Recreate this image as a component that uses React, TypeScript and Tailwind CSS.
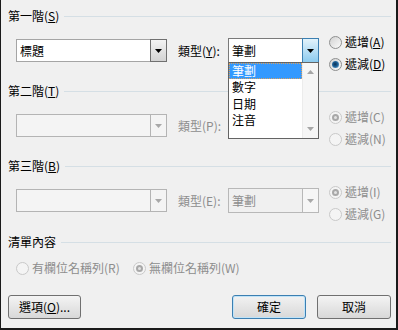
import React from "react"

const FONT = { fontFamily: '"Noto Sans CJK TC", "Noto Sans", sans-serif' }

function Arrow({ color = "#000", up = false }: { color?: string; up?: boolean }) {
  return (
    <svg width="7" height="4" viewBox="0 0 7 4">
      <path d={up ? "M0 4h7L3.5 0z" : "M0 0h7L3.5 4z"} fill={color} />
    </svg>
  )
}

function Key({ k }: { k: string }) {
  return (
    <>
      (<span className="underline underline-offset-[1px]">{k}</span>)
    </>
  )
}

function Header({ children, mt }: { children: React.ReactNode; mt: string }) {
  return (
    <div className={`flex items-center h-[14px] ${mt}`}>
      <span className="text-black whitespace-nowrap">{children}</span>
      <div className="flex-1 h-px bg-[#d5dfe5] ml-[5px]" />
    </div>
  )
}

function Radio({
  label,
  checked = false,
  disabled = false,
}: {
  label: React.ReactNode
  checked?: boolean
  disabled?: boolean
}) {
  return (
    <div className="flex items-center h-[22px]">
      <span
        className={`w-[13px] h-[13px] rounded-full border flex items-center justify-center flex-shrink-0 ${
          disabled
            ? "border-[#c9c9c9] bg-[#f4f4f4]"
            : "border-[#8e8f8f] bg-gradient-to-br from-[#d2d2d2] to-[#fbfbfb]"
        }`}
      >
        {checked &&
          (disabled ? (
            <span className="w-[7px] h-[7px] rounded-full border-2 border-[#a8a8a8] bg-[#e2e2e2]" />
          ) : (
            <span className="w-[7px] h-[7px] rounded-full bg-[radial-gradient(circle_at_45%_45%,#0b2f52_0%,#1d5f95_45%,#7fbde8_100%)]" />
          ))}
      </span>
      <span className={`ml-[3px] whitespace-nowrap ${disabled ? "text-[#8d8d8d]" : "text-black"}`}>{label}</span>
    </div>
  )
}

function Combo({
  text,
  disabled = false,
  width,
}: {
  text?: string
  disabled?: boolean
  width: string
}) {
  return (
    <div
      className={`flex h-[23px] border ${width} ${
        disabled ? "border-[#b4b4b4] bg-[#f4f4f4]" : "border-[#a5a5a5] bg-white"
      }`}
    >
      <div className={`flex-1 flex items-center pl-[3px] ${disabled ? "text-[#8d8d8d]" : "text-black"}`}>{text}</div>
      <div
        className={`w-[17px] -my-px -mr-px flex items-center justify-center border ${
          disabled
            ? "border-[#b4b4b4] bg-[#f4f4f4]"
            : "border-[#707070] bg-gradient-to-b from-[#f3f3f3] to-[#d3d3d3]"
        }`}
      >
        <Arrow color={disabled ? "#a8a8a8" : "#000"} />
      </div>
    </div>
  )
}

export default function App() {
  return (
    <div
      className="w-[398px] h-[330px] bg-[#f0f0f0] border-l border-r-2 border-b-2 border-[#1a1a1a] pl-[7px] pr-[5px] text-[12px] leading-[14px] overflow-hidden"
      style={FONT}
    >
      {/* 第一階 */}
      <Header mt="mt-[9px]">
        第一階<Key k="S" />
      </Header>
      <div className="flex mt-[8px]">
        <div className="flex items-start ml-[8px] mt-[8px]">
          <Combo text="標題" width="w-[151px]" />
          <span className="ml-[11px] w-[50px] h-[23px] flex items-center whitespace-nowrap">
            類型<Key k="Y" />:
          </span>
          <div className="relative -mt-px">
            <div className="flex h-[25px] w-[91px] border border-[#7a7a7a] bg-white">
              <div className="flex-1 flex items-center pl-[3px]">筆劃</div>
              <div className="w-[17px] -my-px -mr-px flex items-center justify-center border border-[#3c7fb1] bg-gradient-to-b from-[#e3f3fb] to-[#8ccbef]">
                <Arrow />
              </div>
            </div>
            <div className="absolute left-0 top-[24px] w-[91px] h-[77px] border border-[#646464] bg-white flex z-10">
              <div className="flex-1 flex flex-col">
                <div className="h-[16px] flex items-center pl-[2px] bg-[#3399ff] text-white border border-dotted border-[#d9a060]">
                  筆劃
                </div>
                <div className="h-[16px] flex items-center pl-[3px]">數字</div>
                <div className="h-[17px] flex items-center pl-[3px]">日期</div>
                <div className="h-[16px] flex items-center pl-[3px]">注音</div>
              </div>
              <div className="w-[16px] bg-[#f6f6f6] border-l border-[#ececec] flex flex-col items-center justify-between py-[7px]">
                <Arrow up color="#a6a6a6" />
                <Arrow color="#a6a6a6" />
              </div>
            </div>
          </div>
        </div>
        <div className="flex flex-col ml-[10px]">
          <Radio label={<>遞增<Key k="A" /></>} />
          <Radio label={<>遞減<Key k="D" /></>} checked />
        </div>
      </div>

      {/* 第二階 */}
      <Header mt="mt-[9px]">
        第二階<Key k="T" />
      </Header>
      <div className="flex mt-[8px]">
        <div className="flex items-start ml-[8px] mt-[8px]">
          <Combo disabled width="w-[151px]" />
          <span className="ml-[11px] w-[50px] h-[23px] flex items-center whitespace-nowrap text-[#8d8d8d]">
            類型(P):
          </span>
          <div className="w-[91px]" />
        </div>
        <div className="flex flex-col ml-[10px]">
          <Radio label="遞增(C)" checked disabled />
          <Radio label="遞減(N)" disabled />
        </div>
      </div>

      {/* 第三階 */}
      <Header mt="mt-[9px]">
        第三階<Key k="B" />
      </Header>
      <div className="flex mt-[8px]">
        <div className="flex items-start ml-[8px] mt-[8px]">
          <Combo disabled width="w-[151px]" />
          <span className="ml-[11px] w-[50px] h-[23px] flex items-center whitespace-nowrap text-[#8d8d8d]">
            類型(E):
          </span>
          <div className="-mt-px">
            <div className="flex h-[25px] w-[91px] border border-[#b8b8b8] bg-[#f0f0f0]">
              <div className="flex-1 flex items-center pl-[3px] text-[#8d8d8d]">筆劃</div>
              <div className="w-[17px] -my-px -mr-px flex items-center justify-center border border-[#b8b8b8] bg-[#f6f6f6]">
                <Arrow color="#a8a8a8" />
              </div>
            </div>
          </div>
        </div>
        <div className="flex flex-col ml-[10px]">
          <Radio label="遞增(I)" checked disabled />
          <Radio label="遞減(G)" disabled />
        </div>
      </div>

      {/* 清單內容 */}
      <Header mt="mt-[10px]">清單內容</Header>
      <div className="flex mt-[8px] ml-[8px]">
        <div className="w-[117px]">
          <Radio label="有欄位名稱列(R)" disabled />
        </div>
        <Radio label="無欄位名稱列(W)" checked disabled />
      </div>

      {/* Buttons */}
      <div className="flex mt-[16px] items-center">
        <button className="w-[73px] h-[24px] rounded-[3px] border border-[#707070] bg-gradient-to-b from-[#f4f4f4] to-[#d8d8d8] text-black">
          選項<Key k="O" />...
        </button>
        <div className="flex-1" />
        <button className="w-[74px] h-[24px] rounded-[3px] border border-[#3c7fb1] bg-gradient-to-b from-[#f2f2f2] to-[#d8d8d8] text-black shadow-[inset_0_0_0_1px_#bfe3f8]">
          確定
        </button>
        <button className="ml-[11px] w-[74px] h-[24px] rounded-[3px] border border-[#707070] bg-gradient-to-b from-[#f4f4f4] to-[#d8d8d8] text-black">
          取消
        </button>
      </div>
    </div>
  )
}
